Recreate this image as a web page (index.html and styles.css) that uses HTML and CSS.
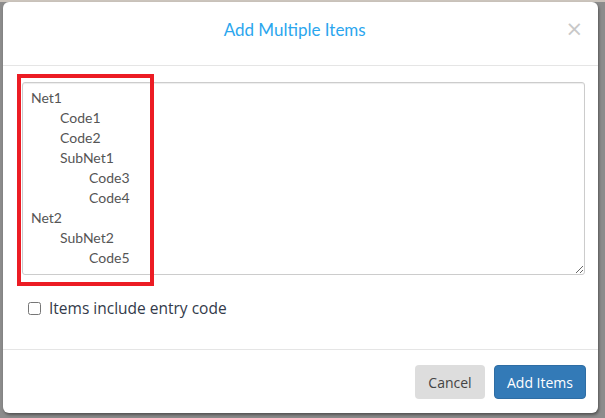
FILE: index.html
```html
<!DOCTYPE html>
<html lang="en">

<head>
	<meta charset="utf-8">
	<title>Add Multiple Items</title>
	<meta name="viewport" content="width=device-width, initial-scale=1">
	<link rel="stylesheet" href="styles.css">
</head>

<body>
	<div class="modal">
		<header class="modal-header">
			<h4 class="modal-title">Add Multiple Items</h4>
			<button type="button" class="close">&times;</button>
		</header>
		<section class="modal-body">
			<div class="entry">
				<textarea class="items" spellcheck="false">Net1
	Code1
	Code2
	SubNet1
		Code3
		Code4
Net2
	SubNet2
		Code5</textarea>
				<span class="mark"></span>
			</div>
			<label class="check">
				<input type="checkbox">
				Items include entry code
			</label>
		</section>
		<footer class="modal-footer">
			<button type="button" class="btn btn-default">Cancel</button>
			<button type="button" class="btn btn-primary">Add Items</button>
		</footer>
	</div>
</body>

</html>
```

FILE: styles.css
```css
*,
*::before,
*::after {
	box-sizing: border-box;
}

body {
	margin: 0;
	height: 418px;
	overflow: hidden;
	background: linear-gradient(#cbc4bc 0 2px, #8c8c8c 2px);
	font-family: "Lato", "Open Sans", sans-serif;
}

.modal {
	display: flex;
	flex-direction: column;
	width: 595px;
	height: 411px;
	margin: 2px 0 0 3px;
	border-radius: 6px;
	background: #fff;
	box-shadow: 1px 2px 3px #0006;
}

.modal-header {
	display: flex;
	align-items: center;
	height: 64px;
	padding: 0 15px 8px;
	border-bottom: 1px solid #e5e5e5;

	.modal-title {
		flex-grow: 1;
		margin: 0;
		padding-left: 6px;
		text-align: center;
		font-size: 17px;
		font-weight: 400;
		color: #2ba6ee;
	}

	.close {
		border: none;
		padding: 0;
		background: none;
		font-family: "DejaVu Sans", sans-serif;
		font-size: 21px;
		line-height: 1;
		color: #c8c8c8;
		cursor: pointer;
	}
}

.modal-body {
	flex-grow: 1;
	padding: 16px 13px 0 19px;

	.entry {
		position: relative;
	}

	.items {
		display: block;
		width: 100%;
		height: 193px;
		margin: 0;
		padding: 5px 8px;
		border: 1px solid #ccc;
		border-radius: 3px;
		font-family: "Lato", sans-serif;
		font-size: 14px;
		line-height: 20px;
		color: #555;
		tab-size: 29px;
		resize: vertical;
		box-shadow: inset 0 1px 1px #00000013;
	}

	/* red highlight drawn over the tree text */
	.mark {
		position: absolute;
		left: -5px;
		top: -8px;
		width: 137px;
		height: 212px;
		border: 4px solid #ec1c24;
		pointer-events: none;
	}
}

.check {
	display: flex;
	align-items: center;
	gap: 8px;
	margin: 22px 0 0 6px;
	font-family: "Open Sans", sans-serif;
	font-size: 15.5px;
	color: #333a4a;

	input {
		width: 13px;
		height: 13px;
		margin: 0;
		accent-color: #888;
	}
}

.modal-footer {
	display: flex;
	justify-content: flex-end;
	gap: 9px;
	padding: 15px 12px 14px;
	border-top: 1px solid #e5e5e5;
}

.btn {
	height: 34px;
	padding: 0;
	border: 1px solid transparent;
	border-radius: 4px;
	font-family: "Open Sans", sans-serif;
	font-size: 14px;
	cursor: pointer;
}

.btn-default {
	width: 70px;
	background: #ddd;
	color: #444;
}

.btn-primary {
	width: 92px;
	background: #337ab7;
	border-color: #2e6da4;
	color: #fff;
}
```
